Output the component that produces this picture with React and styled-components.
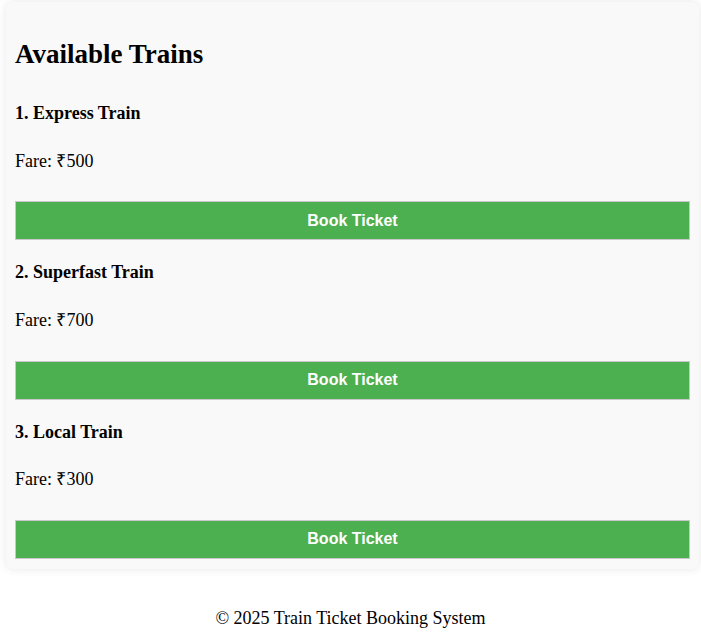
import styled, { createGlobalStyle } from "styled-components";

const GlobalStyle = createGlobalStyle`
    body {
        margin: 0;
        background: #ffffff;
        font-family: "Liberation Serif", "Times New Roman", serif;
        color: #000000;
    }
`;

const trains = [
    { id: 1, name: "Express Train", fare: 500 },
    { id: 2, name: "Superfast Train", fare: 700 },
    { id: 3, name: "Local Train", fare: 300 },
];

const Card = styled.section`
    margin: 2px 2px 0 6px;
    padding: 10px 9px;
    background: #f9f9f9;
    border-radius: 8px;
    box-shadow: 0 0 10px rgba(0, 0, 0, 0.1);
`;

const Title = styled.h2`
    margin: 27px 0 0;
    font-size: 27px;
    font-weight: bold;
`;

const TrainItem = styled.div`
    display: flex;
    flex-direction: column;
    padding-top: ${({ $first }) => ($first ? "33px" : "22px")};
`;

const TrainName = styled.h3`
    margin: 0;
    font-size: 18px;
    font-weight: bold;
`;

const Fare = styled.p`
    margin: 23.5px 0 29.8px;
    font-size: 18px;
`;

const BookButton = styled.button`
    width: 100%;
    height: 39px;
    margin: 0;
    background: #4caf50;
    color: #ffffff;
    border: 1px solid #c8c8c8;
    font-family: "Liberation Sans", Arial, sans-serif;
    font-size: 16px;
    font-weight: bold;
    cursor: pointer;
`;

const Footer = styled.footer`
    margin-top: 39.5px;
    text-align: center;
    font-size: 18px;
`;

const App = () => {
    return (
        <>
            <GlobalStyle />
            <Card>
                <Title>Available Trains</Title>
                {trains.map((train, i) => (
                    <TrainItem key={train.id} $first={i === 0}>
                        <TrainName>
                            {train.id}. {train.name}
                        </TrainName>
                        <Fare>Fare: ₹{train.fare}</Fare>
                        <BookButton>Book Ticket</BookButton>
                    </TrainItem>
                ))}
            </Card>
            <Footer>© 2025 Train Ticket Booking System</Footer>
        </>
    );
};

export default App;
